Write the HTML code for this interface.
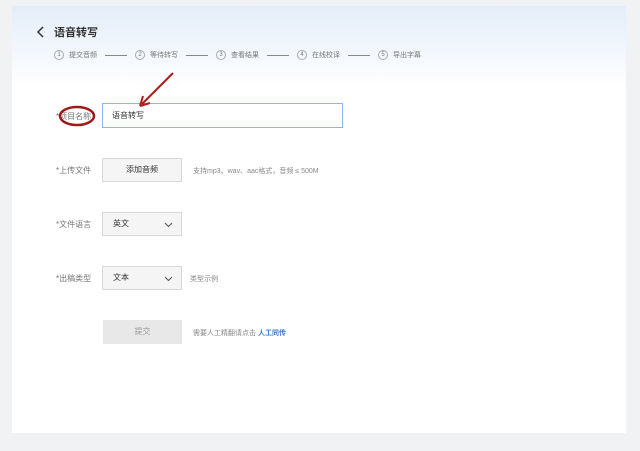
<!DOCTYPE html><html><head><meta charset="utf-8"><style>
body{margin:0;width:640px;height:451px;background:#f1f2f4;font-family:"Liberation Sans","Noto Sans CJK SC",sans-serif;position:relative;overflow:hidden}
.panel{position:absolute;left:12px;top:6px;width:614px;height:427px;background:linear-gradient(#e3edf9 0px,#f4f8fd 50px,#fff 80px)}
.a{position:absolute;white-space:nowrap}
.lab{font-size:8px;color:#777}
.box{position:absolute;border:1px solid #d8d8d8;background:#f5f5f5;font-size:8px;color:#333;box-sizing:border-box}
.hint{font-size:7px;color:#888}
.step{font-size:7px;color:#777}
.c{display:inline-block;width:8px;height:8px;border:1px solid #aaa;border-radius:50%;font-size:6px;text-align:center;line-height:8px;margin-right:5px;vertical-align:middle}
.ln{display:inline-block;width:22px;border-top:1px solid #888;vertical-align:middle;margin:0 8px}
</style></head><body>
<div class="panel"></div>
<svg class="a" style="left:36px;top:26px" width="10" height="12"><path d="M7 1L2 6L7 11" stroke="#333" stroke-width="1.5" fill="none"/></svg>
<div class="a" style="left:54px;top:24px;font-size:11px;font-weight:bold;color:#333">语音转写</div>
<div class="a step" style="left:54px;top:50px">
<span class="c">1</span>提交音频<span class="ln"></span><span class="c">2</span>等待转写<span class="ln"></span><span class="c">3</span>查看结果<span class="ln"></span><span class="c">4</span>在线校译<span class="ln"></span><span class="c">5</span>导出字幕</div>
<div class="a lab" style="left:56px;top:111px">*项目名称</div>
<div class="box" style="left:102px;top:103px;width:241px;height:25px;background:#fff;border-color:#8fb5e0;padding:6px 9px">语音转写</div>
<div class="a lab" style="left:56px;top:165px">*上传文件</div>
<div class="box" style="left:102px;top:158px;width:80px;height:24px;text-align:center;line-height:22px">添加音频</div>
<div class="a hint" style="left:193px;top:166px">支持mp3、wav、aac格式，音频 ≤ 500M</div>
<div class="a lab" style="left:56px;top:219px">*文件语言</div>
<div class="box" style="left:102px;top:212px;width:80px;height:24px;line-height:22px;padding-left:10px">英文<svg style="position:absolute;right:8px;top:9px" width="9" height="6"><path d="M1 1L4.5 4.5L8 1" stroke="#555" fill="none"/></svg></div>
<div class="a lab" style="left:56px;top:273px">*出稿类型</div>
<div class="box" style="left:102px;top:266px;width:80px;height:24px;line-height:22px;padding-left:10px">文本<svg style="position:absolute;right:8px;top:9px" width="9" height="6"><path d="M1 1L4.5 4.5L8 1" stroke="#555" fill="none"/></svg></div>
<div class="a hint" style="left:190px;top:274px">类型示例</div>
<div class="box" style="left:103px;top:320px;width:79px;height:24px;text-align:center;line-height:22px;background:#e8e8e8;border-color:#e8e8e8;color:#999">提交</div>
<div class="a hint" style="left:193px;top:328px">需要人工精翻请点击 <span style="color:#3a7bd5;font-weight:bold">人工同传</span></div>
<svg class="a" style="left:0;top:0" width="640" height="451"><ellipse cx="77" cy="116" rx="17" ry="9" stroke="#a01818" stroke-width="2.5" fill="none"/><path d="M173 73L142 104" stroke="#b01c1c" stroke-width="2"/><path d="M140 106L143 96M140 106L150 103" stroke="#b01c1c" stroke-width="2" fill="none"/></svg>
</body></html>
